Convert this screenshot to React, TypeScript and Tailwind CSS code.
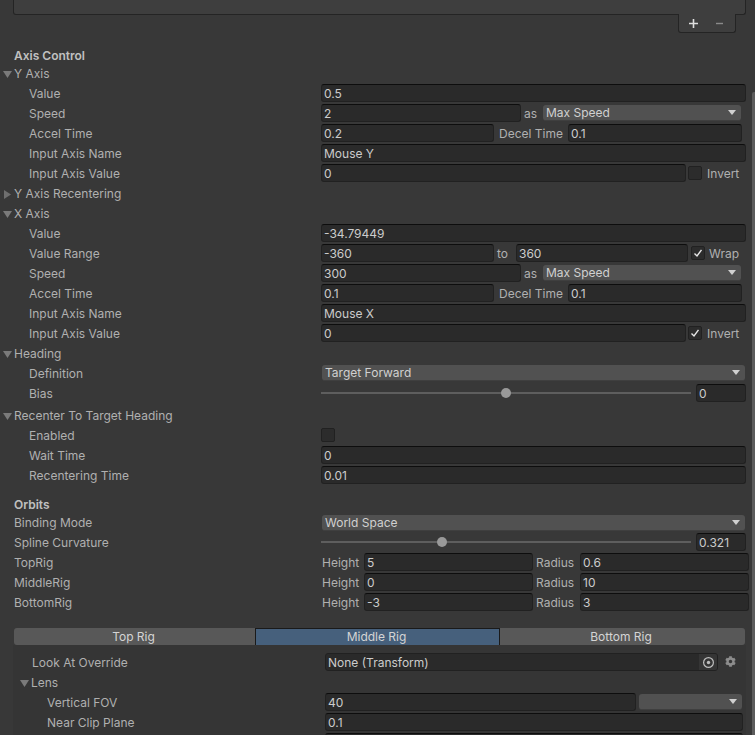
import type { ReactNode } from 'react';
import { FaCog } from 'react-icons/fa';

const labelText = 'text-[12px] text-[#b0b0b0] whitespace-nowrap';

function Fold({ open }: { open?: boolean }) {
    return (
        <svg width="9" height="9" viewBox="0 0 9 9" className="shrink-0">
            {open ? <path d="M0 1 H9 L4.5 8 Z" fill="#7a7a7a" /> : <path d="M1 0 V9 L8 4.5 Z" fill="#6e6e6e" />}
        </svg>
    );
}

function Field({ value, className }: { value?: string; className: string }) {
    return (
        <div className={`h-[18px] shrink-0 rounded-[3px] bg-[#2a2a2a] border border-[#212121] border-t-[#0d0d0d] pl-[2px] pt-px flex items-center text-[12px] text-[#cccccc] whitespace-nowrap overflow-hidden ${className}`}>
            {value}
        </div>
    );
}

function Dropdown({ value, className }: { value?: string; className: string }) {
    return (
        <div className={`h-4 shrink-0 rounded-[3px] bg-[#515151] border-b border-[#3f3f3f] pl-[3px] pr-[5px] flex items-center justify-between text-[12px] text-[#d0d0d0] whitespace-nowrap ${className}`}>
            <span>{value}</span>
            <svg width="8" height="5" viewBox="0 0 8 5"><path d="M0 0 H8 L4 5 Z" fill="#d0d0d0" /></svg>
        </div>
    );
}

function Check({ on, className }: { on?: boolean; className?: string }) {
    return (
        <div className={`w-[14px] h-[14px] mt-[2px] shrink-0 rounded-[2px] bg-[#2c2c2c] border border-[#212121] flex items-center justify-center ${className}`}>
            {on && (
                <svg width="10" height="10" viewBox="0 0 10 10" fill="none">
                    <path d="M1.5 5.5 L4 8 L8.5 1.8" stroke="#e6e6e6" strokeWidth="1.4" />
                </svg>
            )}
        </div>
    );
}

function Slider({ value, knob }: { value: string; knob: number }) {
    return (
        <>
            <div className="w-[370px] h-[18px] relative shrink-0">
                <div className="absolute left-0 right-0 top-[8px] h-[2px] bg-[#5e5e5e]" />
                <div className="absolute top-[4px] w-[10px] h-[10px] rounded-full bg-[#999999]" style={{ left: knob - 5 }} />
            </div>
            <Field value={value} className="ml-[5px] w-[50px]" />
        </>
    );
}

function Row({ label, labelClass = 'w-[321px] pl-[29px]', children }: { label?: string; labelClass?: string; children?: ReactNode }) {
    return (
        <div className="flex h-5">
            <div className={`h-[18px] pt-px shrink-0 flex items-center ${labelText} ${labelClass}`}>{label}</div>
            {children}
        </div>
    );
}

function Header({ label, open, className = 'pl-[3px]' }: { label: string; open?: boolean; className?: string }) {
    return (
        <div className={`flex h-5 items-center gap-[2px] ${labelText} ${className}`}>
            <Fold open={open} />
            <span>{label}</span>
        </div>
    );
}

function Inline({ text, className }: { text: string; className: string }) {
    return <div className={`h-[18px] pt-px shrink-0 flex items-center ${labelText} ${className}`}>{text}</div>;
}

function Title({ text, className }: { text: string; className: string }) {
    return <div className={`pl-[14px] flex items-center text-[12px] font-semibold text-[#c0c0c0] ${className}`}>{text}</div>;
}

function RigRow({ label, height, radius }: { label: string; height: string; radius: string }) {
    return (
        <Row label={label} labelClass="w-[322px] pl-[14px]">
            <Inline text="Height" className="w-[42px]" />
            <Field value={height} className="w-[169px]" />
            <Inline text="Radius" className="w-[47px] pl-[3px]" />
            <Field value={radius} className="w-[169px]" />
        </Row>
    );
}

export default function App() {
    return (
        <div className="w-[755px] h-[735px] overflow-hidden bg-[#383838] flex font-['Inter',sans-serif]">
            <div className="w-[750px] shrink-0">
                {/* list box cut off by the top of the view */}
                <div className="ml-[13px] w-[733px] h-[15px] bg-[#3e3e3e] border-l border-r border-b border-[#242424] rounded-b-[3px]" />
                <div className="ml-[678px] w-[58px] h-[19px] -mt-px bg-[#3e3e3e] border-l border-r border-b border-[#242424] rounded-b-[3px] flex items-center relative">
                    <svg width="58" height="19" viewBox="0 0 58 19" className="shrink-0">
                        <path d="M10 9.5 H19 M14.5 5 V14" stroke="#dedede" strokeWidth="1.6" />
                        <path d="M37 9.5 H44" stroke="#8a8a8a" strokeWidth="1.4" />
                    </svg>
                </div>
                <div className="h-[13px]" />

                <Title text="Axis Control" className="h-[18px] pt-px" />
                <Header label="Y Axis" open />
                <Row label="Value"><Field value="0.5" className="w-[425px]" /></Row>
                <Row label="Speed">
                    <Field value="2" className="w-[200px]" />
                    <Inline text="as" className="w-[22px] pl-[3px]" />
                    <Dropdown value="Max Speed" className="mt-px w-[198px]" />
                </Row>
                <Row label="Accel Time">
                    <Field value="0.2" className="w-[173px]" />
                    <Inline text="Decel Time" className="w-[74px] pl-[5px]" />
                    <Field value="0.1" className="w-[174px]" />
                </Row>
                <Row label="Input Axis Name"><Field value="Mouse Y" className="w-[425px]" /></Row>
                <Row label="Input Axis Value">
                    <Field value="0" className="w-[365px]" />
                    <Check className="ml-[2px]" />
                    <Inline text="Invert" className="ml-[5px]" />
                </Row>
                <Header label="Y Axis Recentering" />
                <Header label="X Axis" open />
                <Row label="Value"><Field value="-34.79449" className="w-[425px]" /></Row>
                <Row label="Value Range">
                    <Field value="-360" className="w-[173px]" />
                    <Inline text="to" className="w-[22px] pl-[3px]" />
                    <Field value="360" className="w-[172px]" />
                    <Check on className="ml-[3px]" />
                    <Inline text="Wrap" className="ml-[4px]" />
                </Row>
                <Row label="Speed">
                    <Field value="300" className="w-[200px]" />
                    <Inline text="as" className="w-[22px] pl-[3px]" />
                    <Dropdown value="Max Speed" className="mt-px w-[198px]" />
                </Row>
                <Row label="Accel Time">
                    <Field value="0.1" className="w-[173px]" />
                    <Inline text="Decel Time" className="w-[74px] pl-[5px]" />
                    <Field value="0.1" className="w-[174px]" />
                </Row>
                <Row label="Input Axis Name"><Field value="Mouse X" className="w-[425px]" /></Row>
                <Row label="Input Axis Value">
                    <Field value="0" className="w-[365px]" />
                    <Check on className="ml-[2px]" />
                    <Inline text="Invert" className="ml-[5px]" />
                </Row>
                <Header label="Heading" open />
                <Row label="Definition"><Dropdown value="Target Forward" className="mt-px ml-px w-[423px]" /></Row>
                <Row label="Bias"><Slider value="0" knob={185} /></Row>
                <div className="h-[2px]" />
                <Header label="Recenter To Target Heading" open />
                <Row label="Enabled"><Check /></Row>
                <Row label="Wait Time"><Field value="0" className="w-[425px]" /></Row>
                <Row label="Recentering Time"><Field value="0.01" className="w-[425px]" /></Row>
                <div className="h-[10px]" />

                <Title text="Orbits" className="h-[17px]" />
                <Row label="Binding Mode" labelClass="w-[321px] pl-[14px]"><Dropdown value="World Space" className="mt-[2px] ml-px w-[423px]" /></Row>
                <Row label="Spline Curvature" labelClass="w-[321px] pl-[14px]"><Slider value="0.321" knob={121} /></Row>
                <RigRow label="TopRig" height="5" radius="0.6" />
                <RigRow label="MiddleRig" height="0" radius="10" />
                <RigRow label="BottomRig" height="-3" radius="3" />
                <div className="h-[15px]" />

                <div className="ml-[14px] w-[731px] h-[17px] flex text-[12px] text-[#d4d4d4]">
                    <div className="w-[241px] pr-[2px] flex items-center justify-center rounded-l-[3px] bg-[#585858]">Top Rig</div>
                    <div className="w-[245px] pr-[2px] flex items-center justify-center bg-[#46607c] border-x border-t border-[#1a1a1a]">Middle Rig</div>
                    <div className="w-[245px] pr-[3px] flex items-center justify-center rounded-r-[3px] bg-[#585858]">Bottom Rig</div>
                </div>
                <div className="ml-[13px] w-[733px] h-[90px] bg-[#353535] pt-[8px]">
                    <Row label="Look At Override" labelClass="w-[312px] pl-[19px]">
                        <div className="w-[393px] h-[18px] shrink-0 rounded-[3px] bg-[#2a2a2a] border border-[#212121] flex items-center justify-between pl-[2px] pt-px text-[12px] text-[#cccccc] overflow-hidden">
                            <span>None (Transform)</span>
                            <div className="w-[18px] h-[18px] -mt-px bg-[#353535] flex items-center justify-center">
                                <svg width="13" height="13" viewBox="0 0 13 13" fill="none">
                                    <circle cx="6.5" cy="6.5" r="4.9" stroke="#bdbdbd" strokeWidth="1.2" />
                                    <circle cx="6.5" cy="6.5" r="1.7" fill="#bdbdbd" />
                                </svg>
                            </div>
                        </div>
                        <FaCog className="ml-[7px] mt-[3px] w-[11px] h-[11px] text-[#8c8c8c]" />
                    </Row>
                    <Header label="Lens" open className="pl-[7px]" />
                    <Row label="Vertical FOV" labelClass="w-[312px] pl-[34px]">
                        <Field value="40" className="w-[311px]" />
                        <Dropdown className="mt-px ml-[3px] w-[103px]" />
                    </Row>
                    <Row label="Near Clip Plane" labelClass="w-[312px] pl-[34px]">
                        <Field value="0.1" className="w-[418px]" />
                    </Row>
                    <Row labelClass="w-[312px]">
                        <Field className="w-[418px]" />
                    </Row>
                </div>
            </div>
            <div className="w-[5px] shrink-0 pl-[2px] pt-[92px]">
                <div className="h-full bg-[#5c5c5c] rounded-tl-[2px]" />
            </div>
        </div>
    );
}
